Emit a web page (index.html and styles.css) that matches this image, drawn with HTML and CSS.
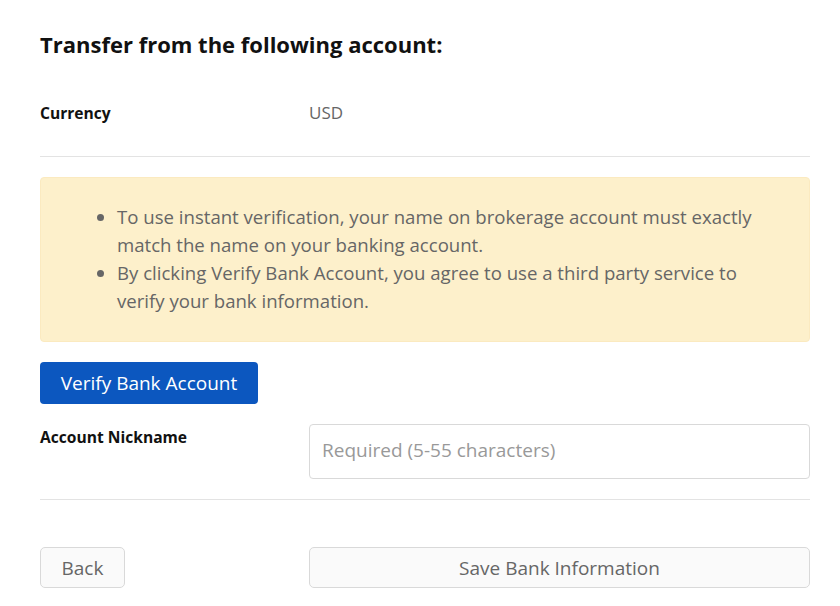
FILE: index.html
```html
<!DOCTYPE html>
<html>
<head>
<meta charset="utf-8">
<link rel="stylesheet" href="styles.css">
</head>
<body>
<div class="page">
  <h2 class="title">Transfer from the following account:</h2>
  <div class="row currency-row">
    <div class="label">Currency</div>
    <div class="value">USD</div>
  </div>
  <hr class="divider">
  <div class="notice">
    <ul>
      <li>To use instant verification, your name on brokerage account must exactly match the name on your banking account.</li>
      <li>By clicking Verify Bank Account, you agree to use a third party service to verify your bank information.</li>
    </ul>
  </div>
  <button class="btn-primary">Verify Bank Account</button>
  <div class="row nick-row">
    <div class="label">Account Nickname</div>
    <input class="input" type="text" placeholder="Required (5-55 characters)">
  </div>
  <hr class="divider">
  <div class="row actions">
    <button class="btn btn-back">Back</button>
    <button class="btn btn-save">Save Bank Information</button>
  </div>
</div>
</body>
</html>
```
FILE: styles.css
```css
* { box-sizing: border-box; }
body {
  margin: 0;
  background: #fff;
  font-family: "Open Sans", Lato, sans-serif;
  color: #111;
}
.page {
  width: 770px;
  margin-left: 40px;
  padding-top: 30px;
}
.title {
  margin: 0;
  font-size: 22px;
  font-weight: 700;
  line-height: 28px;
  color: #111;
}
.row {
  display: flex;
  align-items: flex-start;
}
.label {
  width: 269px;
  flex-shrink: 0;
  font-size: 15.6px;
  font-weight: 700;
  color: #111;
}
.currency-row {
  margin-top: 43px;
  line-height: 24px;
}
.value {
  font-size: 17px;
  color: #666;
}
.divider {
  margin: 0;
  border: 0;
  border-top: 1px solid #e3e3e3;
}
.currency-row + .divider { margin-top: 31px; }
.notice {
  margin-top: 20px;
  background: #fdf0cb;
  border: 1px solid #fbeac0;
  border-radius: 4px;
  padding: 25px 20px 25px 0;
  height: 165px;
}
.notice ul {
  margin: 0;
  padding-left: 76px;
  font-size: 18.6px;
  line-height: 28px;
  color: #666;
}
.btn-primary {
  display: block;
  margin-top: 20px;
  height: 42px;
  width: 218px;
  background: #0c57bf;
  color: #fff;
  border: 0;
  border-radius: 4px;
  font-family: inherit;
  font-size: 19px;
  padding: 0;
}
.nick-row {
  margin-top: 20px;
  align-items: flex-start;
}
.nick-row .label { padding-top: 2px; line-height: 22px; }
.input {
  flex: 1;
  height: 55px;
  border: 1px solid #d9d9d9;
  border-radius: 4px;
  padding: 0 12px 3px;
  font-family: inherit;
  font-size: 19px;
  color: #333;
}
.input::placeholder { color: #999; }
.nick-row + .divider { margin-top: 20px; }
.actions { margin-top: 47px; }
.btn {
  height: 41px;
  background: #fafafa;
  border: 1px solid #d9d9d9;
  border-radius: 5px;
  font-family: inherit;
  font-size: 19px;
  color: #666;
  padding: 0;
}
.btn-back { width: 85px; margin-right: 184px; }
.btn-save { flex: 1; }
```
